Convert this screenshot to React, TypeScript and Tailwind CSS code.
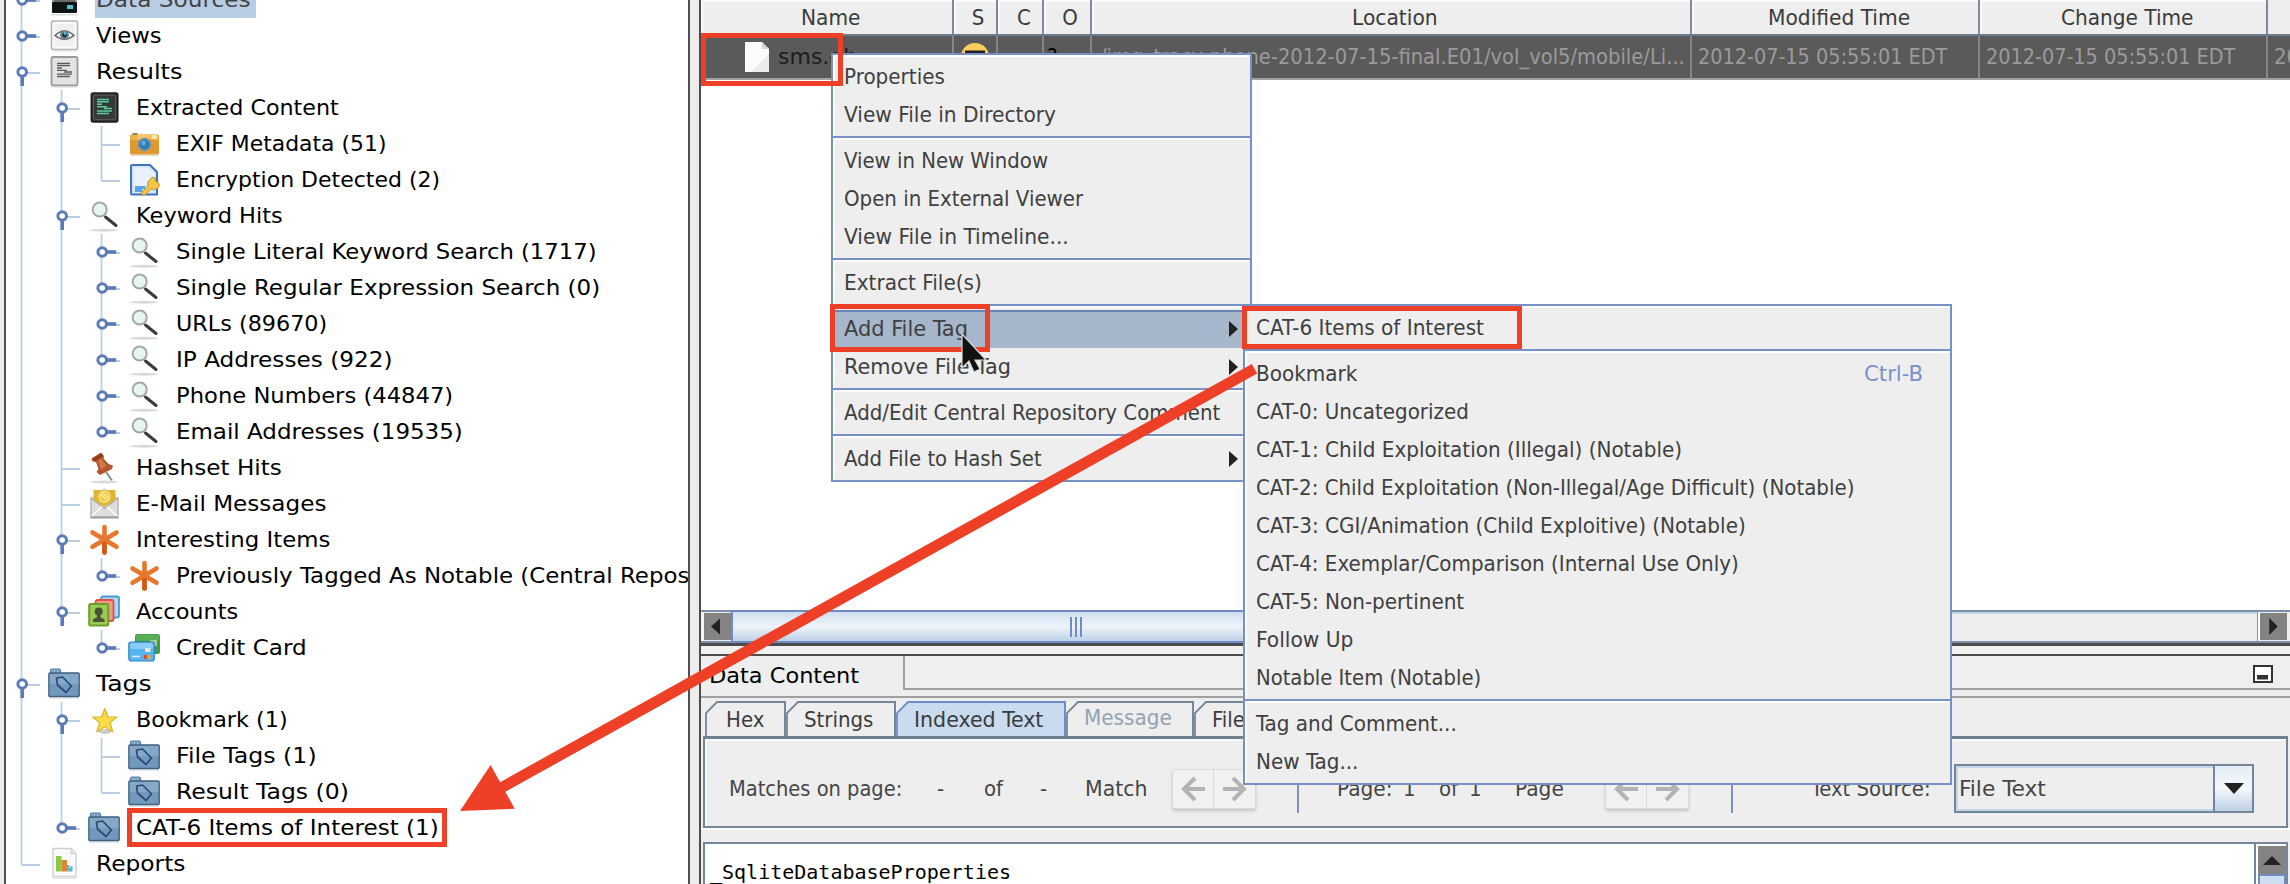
import { useLayoutEffect, useRef, type ReactNode } from "react";

/* Text stretched to a given advance width, so that labels keep their column metrics. */
function Fit({ w, children }: { w: number; children: string }) {
  const ref = useRef<HTMLSpanElement>(null);
  useLayoutEffect(() => {
    const el = ref.current;
    if (!el) return;
    el.style.transform = "none";
    const natural = el.offsetWidth;
    if (natural > 0) el.style.transform = `scaleX(${w / natural})`;
  }, [w, children]);
  return (
    <span className="inline-block shrink-0" style={{ width: w }}>
      <span ref={ref} className="inline-block origin-left whitespace-pre">
        {children}
      </span>
    </span>
  );
}

/* ---------- tree icons, drawn on a 32x36 cell ---------- */

function Cell({ children }: { children: ReactNode }) {
  return (
    <svg width="32" height="36" viewBox="0 0 32 36" className="shrink-0 overflow-visible">
      {children}
    </svg>
  );
}

function DriveIcon() {
  return (
    <Cell>
      <rect x="4" y="12" width="25" height="10" rx="2" fill="#9a9a9a" />
      <rect x="6" y="15" width="21" height="5" fill="#6b6b6b" />
      <rect x="4" y="20" width="25" height="11" rx="1" fill="#0e1414" />
      <rect x="19" y="23" width="6" height="4" fill="#4fc5cf" />
      <rect x="3" y="32" width="27" height="1.5" fill="#dcdcdc" />
    </Cell>
  );
}

function EyeIcon() {
  return (
    <Cell>
      <rect x="3.5" y="3" width="26" height="28.5" rx="1.5" fill="#fafafa" stroke="#b4b4b4" strokeWidth="1.6" />
      <rect x="6.5" y="6" width="20" height="22.5" fill="#efefef" />
      <path d="M7 17.5Q16.5 8.5 26 17.5Q16.5 25 7 17.5Z" fill="#fff" stroke="#666" strokeWidth="1.5" />
      <circle cx="16.5" cy="17" r="4.6" fill="#6d8892" />
      <circle cx="16.5" cy="17" r="2.4" fill="#15313c" />
      <circle cx="17" cy="15.5" r="1.4" fill="#49c8dc" />
      <rect x="4" y="32.3" width="25" height="1.2" fill="#dedede" />
    </Cell>
  );
}

function ResultsIcon() {
  return (
    <Cell>
      <rect x="3.5" y="3" width="26" height="28.5" rx="1.5" fill="#e3e3e3" stroke="#9a9a9a" strokeWidth="1.8" />
      <path d="M9 9.5H22M9 11.7H22M9 14H14M9 16.300H19M16 18H24M9 20.200H24M9 22.500H22" stroke="#5c5c5c" strokeWidth="1.300" />
      <rect x="4" y="32.3" width="25" height="1.2" fill="#d8d8d8" />
    </Cell>
  );
}

function ExtractedIcon() {
  return (
    <Cell>
      <rect x="3.3" y="3" width="26.5" height="29" rx="2" fill="#2e2e2e" stroke="#1f1f1f" strokeWidth="1.5" />
      <rect x="5.5" y="5.2" width="22" height="24.5" rx="1" fill="#353838" stroke="#5f5f5f" strokeWidth="1" />
      <path d="M9 9.5H21M9 11.800H21M9 14.300H14M9 16.800H19M16 18.5H24M9 21H24M9 23.5H21" stroke="#5ccb9b" strokeWidth="1.500" />
    </Cell>
  );
}

function CameraIcon() {
  return (
    <Cell>
      <rect x="4.5" y="7" width="5" height="3" fill="#777" />
      <rect x="2" y="8.5" width="29" height="20" rx="1.5" fill="#e0982f" />
      <rect x="2" y="9" width="29" height="5" rx="1.5" fill="#f0b24c" />
      <rect x="10" y="8" width="12" height="5" fill="#f5c56c" />
      <rect x="23.500" y="9" width="5.500" height="4" fill="#fbe3a5" />
      <circle cx="16.500" cy="18.500" r="6.800" fill="#6d94ac" />
      <circle cx="16.500" cy="18.500" r="5" fill="#2f7eb3" />
      <circle cx="15.500" cy="17" r="2.300" fill="#62aedd" />
      <rect x="3" y="28.500" width="27" height="1.200" fill="#d9c7a9" />
    </Cell>
  );
}

function EncryptionIcon() {
  return (
    <Cell>
      <path d="M4 3H22L29 10V32.5H4Q3 32.5 3 31V4Q3 3 4 3Z" fill="#d3e3f8" stroke="#3f73bb" strokeWidth="2" />
      <path d="M5.500 5.500H20L26.500 11V20L6 28Z" fill="#e8f1fc" />
      <path d="M7 25.500H17M7 28.500H14" stroke="#58a6e8" strokeWidth="3" />
      <path
        d="M13 31L20 24Q18.500 20 22 17.500Q24 14 27 16L27.500 19L31 21.500Q32 26 28 27Q25.500 28.500 23 26.500L17 33Q14.500 34 13 31Z"
        fill="#f3c648"
        stroke="#c58f25"
        strokeWidth="1"
      />
    </Cell>
  );
}

function MagnifierIcon() {
  return (
    <Cell>
      <path d="M17.500 19L28 27.500" stroke="#3a3a3a" strokeWidth="3" strokeLinecap="round" />
      <circle cx="11.700" cy="11.500" r="7" fill="#e6f4f4" stroke="#a3a8a8" strokeWidth="2" />
      <ellipse cx="16" cy="32.200" rx="14" ry="1.500" fill="#dadada" />
    </Cell>
  );
}

function PinIcon() {
  return (
    <Cell>
      <path d="M18 22L24 30.500" stroke="#8c8c8c" strokeWidth="2" />
      <path d="M3.500 8.500L13 2.500L16 6L15.500 8.500L20.500 14L25 15.500L24 19L12 25L8.500 22L10.500 19L8 12L4.500 11.500Z" fill="#b5552b" />
      <path d="M13 8.500L18.500 15.500L13 19.500L10 11Z" fill="#cf7a4c" />
      <path d="M4.500 8.800L13 3.500L15 6L7 11Z" fill="#8f3c18" />
      <ellipse cx="16" cy="32" rx="14" ry="1.400" fill="#dadada" />
    </Cell>
  );
}

function MailIcon() {
  return (
    <Cell>
      <path d="M3 12L16.500 2L30 12V31H3Z" fill="#d2d2d2" />
      <path d="M3 12L16.500 22.500L30 12V31H3Z" fill="#dedede" stroke="#a9a9a9" strokeWidth="1.200" />
      <path d="M5.500 4H27.500V13.500L16.500 21L5.500 13.500Z" fill="#e0b530" />
      <circle cx="16.500" cy="10.800" r="5.500" fill="#eccb4a" stroke="#f7e48d" strokeWidth="1.400" />
      <path d="M13 8.500L19 14M15 7L20.500 12" stroke="#fbeea7" strokeWidth="1.300" />
      <path d="M3.500 30.500L14 20.500M29.500 30.500L19 20.500" stroke="#fff" strokeWidth="1.300" />
      <rect x="2.500" y="30.500" width="28" height="2" fill="#9c9c9c" />
    </Cell>
  );
}

function AsteriskIcon() {
  return (
    <Cell>
      <path d="M16.500 5V30.500M4.500 10.500L28.500 24.800M28.500 10.500L4.500 24.800" stroke="#e8772e" strokeWidth="4.600" strokeLinecap="round" />
      <path d="M16.500 22V30.500" stroke="#d4581a" strokeWidth="4.600" strokeLinecap="round" />
    </Cell>
  );
}

function AccountsIcon() {
  return (
    <Cell>
      <rect x="13" y="2.500" width="18" height="21" rx="2" fill="#a8d8f3" stroke="#4a9bd0" strokeWidth="1.800" />
      <rect x="7.500" y="6" width="18" height="21" rx="2" fill="#f3998a" stroke="#dd5243" strokeWidth="1.800" />
      <rect x="1.200" y="10" width="19" height="21.500" rx="1.500" fill="#9ccb54" stroke="#6f9e2d" strokeWidth="2" />
      <circle cx="10.700" cy="17.500" r="4" fill="#4b5334" />
      <path d="M4.800 28V25.500L9 23V20H12.500V23L16.600 25.500V28Z" fill="#4b5334" />
    </Cell>
  );
}

function CardIcon() {
  return (
    <Cell>
      <rect x="7" y="4" width="25" height="20" rx="2.500" fill="#3f9a49" />
      <rect x="7.800" y="4.800" width="23.400" height="6" rx="2" fill="#57ad58" />
      <rect x="22" y="10" width="7" height="6" rx="1" fill="#a9d08b" />
      <rect x="0.800" y="12" width="25.500" height="19" rx="2.500" fill="#57b5ee" stroke="#2f85c6" strokeWidth="1.200" />
      <rect x="2" y="13" width="23" height="6" rx="2" fill="#8accf5" />
      <rect x="17" y="18" width="5.500" height="4" rx="1" fill="#e9ead8" />
      <rect x="16" y="25" width="3.500" height="4" fill="#d9502c" />
      <rect x="19.500" y="25" width="3" height="4" fill="#f0a93b" />
      <path d="M4 26.500H12" stroke="#d9f0fd" strokeWidth="1.600" />
    </Cell>
  );
}

function TagFolderIcon() {
  return (
    <Cell>
      <path d="M2.500 9V4.500Q2.500 3 4 3H11Q12.500 3 12.500 4.500V9Z" fill="#86a9c8" stroke="#54799c" strokeWidth="1.200" />
      <rect x="0.900" y="7" width="30.300" height="23.500" rx="1" fill="#7198bd" stroke="#41607f" strokeWidth="1.400" />
      <rect x="1.800" y="8" width="28.500" height="10" fill="#85a9ca" />
      <path d="M8.500 12L14.500 11L23.500 20L18 26.500L9.500 19Z" fill="none" stroke="#30496a" strokeWidth="1.700" strokeLinejoin="round" />
      <rect x="1" y="31.200" width="30" height="1.200" fill="#b9c2cc" />
    </Cell>
  );
}

function StarIcon() {
  return (
    <Cell>
      <ellipse cx="17" cy="29.500" rx="6" ry="2.500" fill="#c9c9c9" />
      <path
        d="M16.800 6.500L20 15H29L22 20.500L24.800 30L16.800 24.800L8.800 30L11.600 20.500L4.500 15H13.600Z"
        fill="#f8dc48"
        stroke="#d9b52c"
        strokeWidth="1.200"
        strokeLinejoin="round"
      />
    </Cell>
  );
}

function ReportIcon() {
  return (
    <Cell>
      <path d="M5 2.500H23L28 7.500V30.500H5Z" fill="#fafafa" stroke="#cfcfcf" strokeWidth="1.400" />
      <path d="M23 2.500V7.500H28" fill="#e6e6e6" stroke="#cfcfcf" />
      <rect x="8" y="10" width="5.500" height="15.500" fill="#8fc644" />
      <rect x="13.500" y="14" width="5.500" height="11.500" fill="#e08332" />
      <path d="M19 25.500V19H21.500V22H22.500V20H24.500V25.500Z" fill="#5cb7dd" />
      <rect x="5" y="31.500" width="23" height="1.200" fill="#dcdcdc" />
    </Cell>
  );
}

/* ---------- tree ---------- */

type Handle = "open" | "closed" | "none";
type Node = {
  text: string;
  w: number;
  level: number;
  handle: Handle;
  through: number[];
  last?: boolean;
  icon: () => ReactNode;
  selected?: boolean;
};

const nodes: Node[] = [
  { text: "Data Sources", w: 155, level: 0, handle: "closed", through: [], icon: DriveIcon, selected: true },
  { text: "Views", w: 66, level: 0, handle: "closed", through: [], icon: EyeIcon },
  { text: "Results", w: 86, level: 0, handle: "open", through: [], icon: ResultsIcon },
  { text: "Extracted Content", w: 203, level: 1, handle: "open", through: [0], icon: ExtractedIcon },
  { text: "EXIF Metadata (51)", w: 210, level: 2, handle: "none", through: [0, 1], icon: CameraIcon },
  { text: "Encryption Detected (2)", w: 264, level: 2, handle: "none", through: [0, 1], last: true, icon: EncryptionIcon },
  { text: "Keyword Hits", w: 147, level: 1, handle: "open", through: [0], icon: MagnifierIcon },
  { text: "Single Literal Keyword Search (1717)", w: 420, level: 2, handle: "closed", through: [0, 1], icon: MagnifierIcon },
  { text: "Single Regular Expression Search (0)", w: 424, level: 2, handle: "closed", through: [0, 1], icon: MagnifierIcon },
  { text: "URLs (89670)", w: 151, level: 2, handle: "closed", through: [0, 1], icon: MagnifierIcon },
  { text: "IP Addresses (922)", w: 217, level: 2, handle: "closed", through: [0, 1], icon: MagnifierIcon },
  { text: "Phone Numbers (44847)", w: 277, level: 2, handle: "closed", through: [0, 1], icon: MagnifierIcon },
  { text: "Email Addresses (19535)", w: 287, level: 2, handle: "closed", through: [0, 1], last: true, icon: MagnifierIcon },
  { text: "Hashset Hits", w: 146, level: 1, handle: "none", through: [0], icon: PinIcon },
  { text: "E-Mail Messages", w: 190, level: 1, handle: "none", through: [0], icon: MailIcon },
  { text: "Interesting Items", w: 194, level: 1, handle: "open", through: [0], icon: AsteriskIcon },
  { text: "Previously Tagged As Notable (Central Repos", w: 513, level: 2, handle: "closed", through: [0, 1], last: true, icon: AsteriskIcon },
  { text: "Accounts", w: 102, level: 1, handle: "open", through: [0], last: true, icon: AccountsIcon },
  { text: "Credit Card", w: 131, level: 2, handle: "closed", through: [0], last: true, icon: CardIcon },
  { text: "Tags", w: 56, level: 0, handle: "open", through: [], icon: TagFolderIcon },
  { text: "Bookmark (1)", w: 152, level: 1, handle: "open", through: [0], icon: StarIcon },
  { text: "File Tags (1)", w: 141, level: 2, handle: "none", through: [0, 1], icon: TagFolderIcon },
  { text: "Result Tags (0)", w: 173, level: 2, handle: "none", through: [0, 1], last: true, icon: TagFolderIcon },
  { text: "CAT-6 Items of Interest (1)", w: 303, level: 1, handle: "closed", through: [0], last: true, icon: TagFolderIcon },
  { text: "Reports", w: 89, level: 0, handle: "none", through: [], last: true, icon: ReportIcon },
];

function Guides({ node }: { node: Node }) {
  const x = 21.5 + node.level * 40;
  const cx = x + 0.7;
  const width = 42 + node.level * 40;
  return (
    <svg width={width} height="36" viewBox={`6 -18 ${width} 36`} className="shrink-0">
      <g stroke="#b9cde5" strokeWidth="1.800">
        {node.through.map((l) => (
          <path key={l} d={`M${21.5 + l * 40} -18V18`} />
        ))}
        <path d={`M${x} -18V${node.last ? 1 : 18}M${x} 1H${x + 18.5}`} />
      </g>
      {node.handle !== "none" && (
        <g stroke="#5b7bb8" strokeWidth="3.600">
          <path d={node.handle === "open" ? `M${cx} 4V14` : `M${cx + 4} 0H${cx + 14}`} />
          <circle cx={cx} cy="0" r="4.300" fill="#fff" strokeWidth="3" />
        </g>
      )}
    </svg>
  );
}

function Tree() {
  return (
    <div className="ml-1 w-[686px] overflow-hidden border-x-2 border-[#4f4f4f] bg-white text-black">
      <div className="-mt-[18px] flex flex-col">
        {nodes.map((n) => {
          const Icon = n.icon;
          return (
            <div key={n.text} className="flex h-9 items-center">
              <Guides node={n} />
              <Icon />
              <span
                className={
                  n.selected
                    ? "ml-[15px] flex h-9 w-[161px] items-center bg-[#b8cce4] pl-px text-[#444]"
                    : "ml-4 flex h-9 items-center"
                }
              >
                <Fit w={n.w}>{n.text}</Fit>
              </span>
            </div>
          );
        })}
      </div>
    </div>
  );
}

/* ---------- file table ---------- */

function Table() {
  const head = "flex shrink-0 items-center justify-center border-r-2 border-[#7b8b9d] pt-0.5 shadow-[inset_2px_2px_0_#fafafa]";
  const cell = "flex shrink-0 items-center border-r-2 border-[#858585]";
  return (
    <div className="font-['DejaVu_Sans_Condensed']">
      <div className="flex h-9 overflow-hidden border-b-2 border-[#6a7d8d] bg-[#eee] text-[#3b3b3b]">
        <div className={head + " w-[253px] pl-2"}><Fit w={59}>Name</Fit></div>
        <div className={head + " w-[44px] pl-1.5"}>S</div>
        <div className={head + " w-[46px] pl-2"}>C</div>
        <div className={head + " w-[48px] pl-1.5"}>O</div>
        <div className={head + " w-[600px] pl-2"}><Fit w={86}>Location</Fit></div>
        <div className={head + " w-[288px] pl-2"}><Fit w={142}>Modified Time</Fit></div>
        <div className={head + " w-[288px] pl-2"}><Fit w={132}>Change Time</Fit></div>
      </div>
      <div className="flex h-11 overflow-hidden border-b-2 border-[#a3a3a3] bg-[#5a5a5a] text-[#9b9b9b]">
        <div className={cell + " w-[253px] pl-[42px] text-[#1c1c1c]"}>
          <svg width="28" height="34" viewBox="0 0 28 34" className="mr-[7px] shrink-0">
            <path d="M2 2H19L26 9V32H2Z" fill="#fbfbfb" />
            <path d="M19 2V9H26Z" fill="#d4d4d4" />
            <path d="M26 14V32H8Z" fill="#ececec" />
          </svg>
          <span className="font-['DejaVu_Sans']">sms.db</span>
        </div>
        <div className={cell + " w-[44px] justify-center"}>
          <svg width="28" height="30" viewBox="0 0 28 30">
            <circle cx="14" cy="15" r="14" fill="#f8cf5e" />
            <path d="M4 8.500H24V12H21V17H7V12H4Z" fill="#1f1f1f" />
            <path d="M9 11.500H19V13.500H9Z" fill="#f8cf5e" />
          </svg>
        </div>
        <div className={cell + " w-[46px]"} />
        <div className={cell + " w-[48px] pl-[3px] text-black"}>?</div>
        <div className={cell + " w-[600px] pl-[8px]"}>
          <Fit w={585}>/img_tracy-phone-2012-07-15-final.E01/vol_vol5/mobile/Li...</Fit>
        </div>
        <div className={cell + " w-[288px] pl-[6px]"}><Fit w={249}>2012-07-15 05:55:01 EDT</Fit></div>
        <div className={cell + " w-[288px] pl-[6px]"}><Fit w={249}>2012-07-15 05:55:01 EDT</Fit></div>
        <div className="flex shrink-0 items-center pl-[6px]">20</div>
      </div>
    </div>
  );
}

function HScroll() {
  return (
    <div className="flex h-[33px] border-y-2 border-[#7b8fa6] bg-[#eee]">
      <div className="w-[3px] bg-[#f5f5f5]" />
      <div className="my-px flex w-[27px] items-center justify-center bg-[#838383] pr-1">
        <svg width="9" height="17" viewBox="0 0 10 18"><path d="M10 0V18L0 9Z" fill="#222" /></svg>
      </div>
      <div className="-my-0.5 flex w-[690px] items-center justify-center gap-[3px] border-2 border-[#6f8dc4] bg-linear-to-b from-[#cfdff0] via-[#eef4fa] to-[#bdd0e6]">
        <div className="h-5 w-0.5 bg-[#6f8dc4]" />
        <div className="h-5 w-0.5 bg-[#6f8dc4]" />
        <div className="h-5 w-0.5 bg-[#6f8dc4]" />
      </div>
      <div className="grow border-t-2 border-[#c3d6ea]" />
      <div className="w-[3px] border-l border-[#7b8fa6] bg-white" />
      <div className="my-px mr-[3px] flex w-[27px] items-center justify-center bg-[#838383]">
        <svg width="9" height="17" viewBox="0 0 9 18"><path d="M0 0V18L9 9Z" fill="#222" /></svg>
      </div>
    </div>
  );
}

/* ---------- data content ---------- */

function Tab({ className, children, active }: { className: string; children: ReactNode; active?: boolean }) {
  const line = active ? "#6f8bc8" : "#74879a";
  return (
    <div className={"flex h-[35px] " + className}>
      <svg width="13" height="35" viewBox="0 0 13 35" className="shrink-0">
        <path d="M1 35V12L12 1H13V35Z" fill={active ? "#c8dbef" : "#eee"} />
        <path d="M1 35V12L12 1H13" fill="none" stroke={line} strokeWidth="1.800" />
      </svg>
      <div
        className={
          active
            ? "flex grow items-center border-t-2 border-r-2 border-[#6f8bc8] bg-[#c8dbef]"
            : "flex grow items-center border-t-2 border-r-2 border-[#74879a] bg-[#eee]"
        }
      >
        {children}
      </div>
    </div>
  );
}

function Pager() {
  return (
    <div className="flex h-10 w-[84px] shrink-0 rounded-[3px] border border-[#dadada] bg-[#f1f1f1] shadow-[0_2px_3px_#c4c4c4]">
      <div className="flex w-[42px] items-center justify-center border-r border-[#dadada]">
        <svg width="24" height="26" viewBox="0 0 24 26" fill="none" stroke="#b3b3b3" strokeWidth="4">
          <path d="M14 2L3 13L14 24M3 13H24" />
        </svg>
      </div>
      <div className="flex w-[42px] items-center justify-center">
        <svg width="24" height="26" viewBox="0 0 24 26" fill="none" stroke="#b3b3b3" strokeWidth="4">
          <path d="M10 2L21 13L10 24M0 13H21" />
        </svg>
      </div>
    </div>
  );
}

function DataContent() {
  return (
    <div className="flex h-[230px] shrink-0 flex-col border-t-2 border-[#4c4c4c] bg-[#eee]">
      <div className="flex h-[42px] shrink-0 border-b-2 border-[#a0a0a0] bg-[#eee]">
        <div className="flex w-[202px] items-center pl-[8px] text-black">
          <Fit w={150}>Data Content</Fit>
        </div>
        <div className="mb-1.5 flex grow items-center justify-end border-b-2 border-l-2 border-[#a0a0a0] bg-[#efefef] pr-[17px] pt-[3px]">
          <svg width="20" height="18" viewBox="0 0 20 18">
            <rect x="1" y="1" width="18" height="16" fill="#fff" stroke="#333" strokeWidth="2" />
            <rect x="4" y="10" width="11" height="4.500" fill="#333" />
          </svg>
        </div>
      </div>
      <div className="flex h-[38px] shrink-0 items-end pl-[3px] font-['DejaVu_Sans_Condensed'] text-[#3c3c3c]">
        <Tab className="w-[82px] pl-px"><span className="pl-2"><Fit w={38}>Hex</Fit></span></Tab>
        <Tab className="w-[110px]"><span className="pl-[5px]"><Fit w={69}>Strings</Fit></span></Tab>
        <Tab className="w-[170px]" active><span className="pl-[5px]"><Fit w={129}>Indexed Text</Fit></span></Tab>
        <Tab className="w-[128px]"><span className="pb-1 pl-[5px] text-[#93a3b3]"><Fit w={88}>Message</Fit></span></Tab>
        <Tab className="w-[190px]"><span className="pl-[5px]">File</span></Tab>
      </div>
      <div className="mx-0.5 shrink-0 border-t-[3px] border-[#6f8090]">
        <div className="flex h-[89px] items-center border-x-2 border-b-2 border-[#74879a] pt-3 pl-6 font-['DejaVu_Sans_Condensed'] text-[#464646] shadow-[inset_2px_2px_0_#f8f8f8]">
          <div className="w-[208px] shrink-0"><Fit w={173}>Matches on page:</Fit></div>
          <div className="w-[47px] shrink-0">-</div>
          <div className="w-[56px] shrink-0">of</div>
          <div className="w-[45px] shrink-0">-</div>
          <div className="w-[87px] shrink-0"><Fit w={62}>Match</Fit></div>
          <Pager />
          <div className="mr-[38px] ml-[41px] h-[49px] w-0.5 shrink-0 bg-[#7b92c8]" />
          <div className="w-[66px] shrink-0"><Fit w={56}>Page:</Fit></div>
          <div className="w-[36px] shrink-0">1</div>
          <div className="w-[30px] shrink-0">of</div>
          <div className="w-[46px] shrink-0">1</div>
          <div className="w-[90px] shrink-0"><Fit w={49}>Page</Fit></div>
          <Pager />
          <div className="mr-[78px] ml-[42px] h-[49px] w-0.5 shrink-0 bg-[#7b92c8]" />
          <div className="w-[143px] shrink-0"><Fit w={120}>Text Source:</Fit></div>
          <div className="flex h-[49px] w-[300px] shrink-0 border-2 border-[#74879a] shadow-[inset_0_0_0_2px_#c3d6ea]">
            <div className="flex grow items-center pl-[3px]"><Fit w={87}>File Text</Fit></div>
            <div className="flex w-[39px] items-center justify-center border-l-2 border-[#74879a] bg-linear-to-b from-[#e4edf6] via-[#f4f8fc] to-[#bcd0e4]">
              <svg width="20" height="11" viewBox="0 0 20 11"><path d="M0 0H20L10 11Z" fill="#222" /></svg>
            </div>
          </div>
        </div>
      </div>
      <div className="h-[14px] shrink-0 border-t-2 border-white" />
      <div className="mx-0.5 flex min-h-0 grow border-x-2 border-t-2 border-[#74879a] bg-white">
        <div className="grow pt-4 pl-[5px] font-['DejaVu_Sans_Mono'] text-[20px] leading-6 text-black">_SqliteDatabaseProperties</div>
        <div className="flex w-[32px] flex-col border-l-2 border-[#74879a] bg-white pl-0.5">
          <div className="mt-0.5 flex h-[28px] w-[28px] shrink-0 items-center justify-center bg-[#838383]">
            <svg width="18" height="9" viewBox="0 0 18 9"><path d="M9 0L18 9H0Z" fill="#222" /></svg>
          </div>
          <div className="h-[10px] w-[28px] shrink-0 border-x-2 border-t-2 border-[#6f8dc4] bg-[#cfdff0]" />
        </div>
      </div>
    </div>
  );
}

/* ---------- menus ---------- */

type Item = { text: string; w: number; sub?: boolean; accel?: string; hot?: boolean } | null;

const fileMenu: Item[] = [
  { text: "Properties", w: 101 },
  { text: "View File in Directory", w: 212 },
  null,
  { text: "View in New Window", w: 204 },
  { text: "Open in External Viewer", w: 239 },
  { text: "View File in Timeline...", w: 225 },
  null,
  { text: "Extract File(s)", w: 138 },
  null,
  { text: "Add File Tag", w: 124, sub: true, hot: true },
  { text: "Remove File Tag", w: 167, sub: true },
  null,
  { text: "Add/Edit Central Repository Comment", w: 376 },
  null,
  { text: "Add File to Hash Set", w: 198, sub: true },
];

const tagMenu: Item[] = [
  { text: "CAT-6 Items of Interest", w: 228 },
  null,
  { text: "Bookmark", w: 101, accel: "Ctrl-B" },
  { text: "CAT-0: Uncategorized", w: 213 },
  { text: "CAT-1: Child Exploitation (Illegal) (Notable)", w: 426 },
  { text: "CAT-2: Child Exploitation (Non-Illegal/Age Difficult) (Notable)", w: 598 },
  { text: "CAT-3: CGI/Animation (Child Exploitive) (Notable)", w: 490 },
  { text: "CAT-4: Exemplar/Comparison (Internal Use Only)", w: 483 },
  { text: "CAT-5: Non-pertinent", w: 208 },
  { text: "Follow Up", w: 97 },
  { text: "Notable Item (Notable)", w: 225 },
  null,
  { text: "Tag and Comment...", w: 201 },
  { text: "New Tag...", w: 102 },
];

function Menu({ items, className }: { items: Item[]; className: string }) {
  return (
    <div
      className={
        "absolute border-2 border-[#7790c6] bg-[#eee] pt-[3px] pb-0.5 font-['DejaVu_Sans_Condensed'] text-[#404040] shadow-[inset_2px_2px_0_#fff] " +
        className
      }
    >
      {items.map((it, i) =>
        it === null ? (
          <div key={i} className="h-2 pt-0.5">
            <div className="h-1 border-t-2 border-[#7790c6] bg-white" />
          </div>
        ) : (
          <div
            key={i}
            className={
              it.hot
                ? "flex h-[38px] items-center border-t-2 border-[#6a83b4] bg-[#a6b7cc] pr-[12px] pb-0.5 pl-[11px]"
                : "flex h-[38px] items-center pr-[12px] pl-[11px]"
            }
          >
            <Fit w={it.w}>{it.text}</Fit>
            <span className="grow" />
            {it.accel && (
              <span className="pr-[15px] text-[#7a91c9]">
                <Fit w={59}>{it.accel}</Fit>
              </span>
            )}
            {it.sub && (
              <svg width="9" height="16" viewBox="0 0 9 16">
                <path d="M0 0L9 8L0 16Z" fill="#222" />
              </svg>
            )}
          </div>
        ),
      )}
    </div>
  );
}

export default function App() {
  return (
    <div className="relative flex h-[884px] w-[2290px] overflow-hidden bg-[#ececec] font-['DejaVu_Sans'] text-[22px] leading-9">
      <Tree />
      <div className="ml-[9px] flex w-[1591px] flex-col border-l-2 border-[#4c4c4c]">
        <div className="flex h-[646px] shrink-0 flex-col border-b-[3px] border-[#4c4c4c] bg-white">
          <Table />
          <div className="grow" />
          <HScroll />
        </div>
        <div className="h-2 shrink-0 bg-[#f1f1f1]" />
        <DataContent />
      </div>

      <Menu items={fileMenu} className="top-[53px] left-[831px] w-[421px]" />
      <Menu items={tagMenu} className="top-[304px] left-[1243px] w-[709px]" />

      <div className="absolute top-[33px] left-[701px] h-[53px] w-[142px] border-[5px] border-[#ee4027]" />
      <div className="absolute top-[304px] left-[830px] h-[48px] w-[160px] border-[5px] border-[#ee4027]" />
      <div className="absolute top-[306px] left-[1242px] h-[43px] w-[280px] border-[5px] border-[#ee4027]" />
      <div className="absolute top-[808px] left-[127px] h-[39px] w-[320px] border-[5px] border-[#ee4027]" />

      <svg className="absolute inset-0" width="2290" height="884" viewBox="0 0 2290 884">
        <path d="M962 334V368L969 361L974 372L980 369L975 360H986Z" fill="#111" stroke="#d9d9d9" strokeWidth="1.200" />
        <path d="M1254.500 368.700L500 788.500" stroke="#ee4027" strokeWidth="11" />
        <path d="M460 811L490.600 765L514.700 808.700Z" fill="#ee4027" />
      </svg>
    </div>
  );
}
